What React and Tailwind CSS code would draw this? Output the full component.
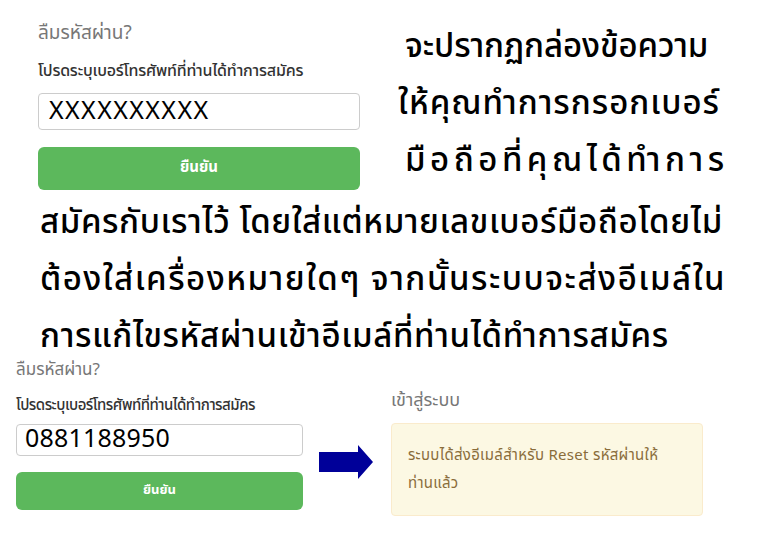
import React from 'react';

const thai = '"Noto Sans Thai", Tahoma, "Noto Sans", "DejaVu Sans", sans-serif';

export default function App() {
  return (
    <div
      className="w-[769px] h-[547px] overflow-hidden bg-white"
      style={{ fontFamily: thai }}
    >
      {/* top: form before + note */}
      <div className="flex">
        <div className="ml-[38px] mt-[24px] w-[322px] flex flex-col">
          <div className="text-[19px] leading-[20px] text-[#777]">ลืมรหัสผ่าน?</div>
          <div className="mt-[18px] text-[16px] leading-[18px] font-medium tracking-[-0.2px] text-[#333] whitespace-nowrap">
            โปรดระบุเบอร์โทรศัพท์ที่ท่านได้ทำการสมัคร
          </div>
          <div className="mt-[13px] h-[37px] rounded-[4px] border border-[#ccc] bg-white pl-[10px] flex items-center text-[25px] text-black tracking-[1.4px]">
            XXXXXXXXXX
          </div>
          <button className="mt-[17px] h-[43px] rounded-[6px] bg-[#5cb85c] text-white text-[15px] font-bold">
            ยืนยัน
          </button>
        </div>
        <div className="ml-[38px] mt-[19px] flex flex-col text-[33px] leading-[57px] font-medium text-black whitespace-nowrap">
          <div className="pl-[7px] tracking-[-0.1px]">จะปรากฏกล่องข้อความ</div>
          <div className="tracking-[1px]">ให้คุณทำการกรอกเบอร์</div>
          <div className="pl-[7px] tracking-[4.5px]">มือถือที่คุณได้ทำการ</div>
        </div>
      </div>

      <div className="mt-[5px] ml-[40px] flex flex-col text-[33px] font-medium text-black whitespace-nowrap">
        <div className="leading-[57px] tracking-[0.6px]">สมัครกับเราไว้ โดยใส่แต่หมายเลขเบอร์มือถือโดยไม่</div>
        <div className="leading-[57px] tracking-[1.5px]">ต้องใส่เครื่องหมายใดๆ จากนั้นระบบจะส่งอีเมล์ใน</div>
        <div className="mt-[6px] leading-[45px] tracking-[0.65px]">การแก้ไขรหัสผ่านเข้าอีเมล์ที่ท่านได้ทำการสมัคร</div>
      </div>

      {/* bottom: form after + result */}
      <div className="flex items-start">
        <div className="ml-[16px] w-[287px] flex flex-col">
          <div className="text-[17px] leading-[20px] text-[#777]">ลืมรหัสผ่าน?</div>
          <div className="mt-[17px] text-[15px] leading-[18px] font-medium tracking-[-0.5px] text-[#333] whitespace-nowrap">
            โปรดระบุเบอร์โทรศัพท์ที่ท่านได้ทำการสมัคร
          </div>
          <div className="mt-[9px] h-[32px] rounded-[4px] border border-[#ccc] bg-white pl-[8px] flex items-center text-[25px] text-black tracking-[0.2px]">
            0881188950
          </div>
          <button className="mt-[16px] h-[38px] rounded-[6px] bg-[#5cb85c] text-white text-[13px] font-bold">
            ยืนยัน
          </button>
        </div>
        <svg className="ml-[16px] mt-[85px]" width="55" height="34" viewBox="0 0 55 34">
          <path d="M0 7 H39 V0 L54 17 L39 34 V27 H0 Z" fill="#000099" />
        </svg>
        <div className="ml-[17px] mt-[31px] w-[312px] flex flex-col">
          <div className="text-[18px] leading-[20px] text-[#777]">เข้าสู่ระบบ</div>
          <div className="mt-[12px] h-[93px] rounded-[4px] border border-[#faebcc] bg-[#fcf8e3] px-[16px] pt-[18px] text-[15px] leading-[28px] tracking-[0.3px] text-[#8a6d3b] whitespace-nowrap">
            ระบบได้ส่งอีเมล์สำหรับ Reset รหัสผ่านให้
            <br />
            ท่านแล้ว
          </div>
        </div>
      </div>
    </div>
  );
}
